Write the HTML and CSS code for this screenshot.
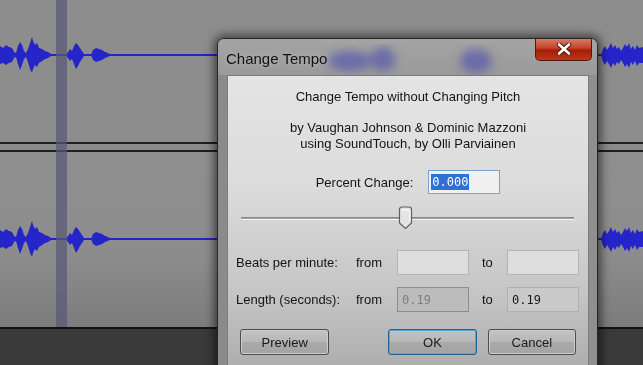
FILE: index.html
```html
<!DOCTYPE html>
<html lang="en">
<head>
<meta charset="utf-8">
<title>Change Tempo</title>
<link rel="stylesheet" href="styles.css">
</head>
<body>
<div class="stage">
	<svg class="defs" width="0" height="0">
		<defs>
			<g id="wave">
				<rect x="0" y="-1" width="643" height="2"/>
				<polygon points="0,-9 3,-7 6,-10 9,-8 12,-7 14,-3 16,-2 18,-9 20,-13 22,-10 24,-4 26,-2 28,-6 30,-12 32,-18 33,-14 35,-10 37,-12 39,-7 42,-6 45,-4 48,-3 51,-1 53,0 51,1 48,3 45,4 42,6 39,8 37,12 35,10 33,14 32,18 30,14 28,7 26,2 24,4 22,10 20,15 18,9 16,2 14,3 12,7 9,8 6,10 3,8 0,9"/>
				<polygon points="66,0 68,-3 70,-6 72,-4 74,-9 76,-12 78,-10 80,-7 82,-4 84,-1 86,0 84,1 82,4 80,7 78,11 76,14 74,9 72,4 70,6 68,3"/>
				<polygon points="91,0 93,-5 96,-7 99,-6 102,-5 105,-3 108,-2 111,0 108,2 105,3 102,5 99,6 96,7 93,5"/>
				<polygon points="601,0 603,-6 605,-9 607,-5 609,-8 611,-12 613,-7 615,-10 617,-6 619,-8 621,-4 623,-7 625,-11 627,-8 629,-12 631,-6 633,-9 635,-5 637,-10 639,-7 643,-8 643,8 639,8 637,11 635,6 633,10 631,7 629,13 627,9 625,12 623,8 621,5 619,9 617,7 615,11 613,8 611,13 609,9 607,6 605,10 603,7"/>
			</g>
		</defs>
	</svg>

	<div class="track track-top">
		<svg width="643" height="142"><use href="#wave" x="0" y="55"/></svg>
	</div>
	<div class="track-sep"></div>
	<div class="track track-bottom">
		<svg width="643" height="175"><use href="#wave" x="0" y="87"/></svg>
	</div>
	<div class="footer"></div>

	<div class="cursor-bar"></div>

	<div class="dialog">
		<div class="titlebar">
			<svg class="glass" width="380" height="36">
				<defs><filter id="blur"><feGaussianBlur stdDeviation="5"/></filter></defs>
				<g filter="url(#blur)" fill="#3a3ab4" opacity=".5">
					<ellipse cx="132" cy="22" rx="22" ry="10"/>
					<ellipse cx="165" cy="20" rx="12" ry="12"/>
					<ellipse cx="258" cy="22" rx="16" ry="12"/>
				</g>
			</svg>
			<span class="title">Change Tempo</span>
			<button class="close" type="button" aria-label="Close">
				<svg width="16" height="12" viewBox="0 0 16 12"><path d="M3 1.5 L13 10.5 M13 1.5 L3 10.5" stroke="#4a1008" stroke-width="4.5" stroke-linecap="round"/><path d="M3 1.5 L13 10.5 M13 1.5 L3 10.5" stroke="#fff" stroke-width="2.6" stroke-linecap="round"/></svg>
			</button>
		</div>
		<div class="client">
			<p class="heading">Change Tempo without Changing Pitch</p>
			<p class="credits">by Vaughan Johnson &amp; Dominic Mazzoni<br>using SoundTouch, by Olli Parviainen</p>

			<div class="percent-row">
				<label>Percent Change:</label>
				<div class="field focused"><span class="sel">0.000</span></div>
			</div>

			<div class="slider">
				<div class="slider-track"></div>
				<svg class="thumb" width="15" height="24" viewBox="0 0 15 24">
					<path d="M1.5 3.5 Q1.5 1 4 1 H11 Q13.5 1 13.5 3.5 V17 L7.5 22.5 L1.5 17 Z" fill="#e4e4e4" stroke="#5e5e5e" stroke-width="1.2"/>
					<path d="M3 4 H12 V15" fill="none" stroke="#fafafa" stroke-width="1"/>
				</svg>
			</div>

			<div class="rate-grid">
				<span>Beats per minute:</span>
				<span>from</span>
				<div class="field"></div>
				<span class="to">to</span>
				<div class="field"></div>

				<span>Length (seconds):</span>
				<span>from</span>
				<div class="field disabled">0.19</div>
				<span class="to">to</span>
				<div class="field plain">0.19</div>
			</div>

			<div class="buttons">
				<button type="button" class="btn">Preview</button>
				<button type="button" class="btn default">OK</button>
				<button type="button" class="btn">Cancel</button>
			</div>
		</div>
	</div>
</div>
</body>
</html>
```

FILE: styles.css
```css
*{margin:0;padding:0;box-sizing:border-box;}
body{background:#3b3b3b;font-family:"Liberation Sans",Arial,sans-serif;}
.stage{width:643px;height:365px;overflow:hidden;position:relative;display:flex;flex-direction:column;background:#3b3b3b;filter:blur(.4px);}
.defs{position:absolute;}
.track svg{display:block;}
#wave{fill:#2424c8;}
.track-top{height:142px;background:#8d8d8d;}
.track-sep{height:10px;background:#8b8b8b;border-top:2px solid #1e1e1e;border-bottom:2px solid #1e1e1e;}
.track-bottom{height:175px;background:linear-gradient(#8f8f8f,#8c8c8c 60%,#7c7c7c);}
.footer{flex:1;background:#3a3a3a;border-top:2px solid #121212;}

/* selection cursor line across both tracks */
.cursor-bar{position:absolute;left:56px;top:0;width:11px;height:327px;background:rgba(88,88,118,.72);}

/* dialog window */
.dialog{position:absolute;left:217px;top:38px;width:381px;height:345px;border:1px solid #262626;border-radius:7px 7px 0 0;background:linear-gradient(90deg,#8a8a8a,#9c9c9c 40%,#a0a0a0 80%,#8e8e8e);box-shadow:0 0 10px 3px rgba(0,0,0,.55);display:flex;flex-direction:column;}
.titlebar{height:36px;position:relative;display:flex;align-items:center;padding-left:8px;border-radius:6px 6px 0 0;background:linear-gradient(#a4a4a4,#9a9a9a);overflow:hidden;}
.glass{position:absolute;left:0;top:0;}
.title{position:relative;font-size:15px;color:#121212;margin-top:2px;text-shadow:0 0 6px rgba(255,255,255,.35);}
.close{position:absolute;right:5px;top:-1px;width:57px;height:23px;border:1px solid #4d1a12;border-top:0;border-radius:0 0 5px 5px;background:linear-gradient(#d8806a,#c4452c 45%,#a81c08 55%,#b83a1c);display:flex;align-items:center;justify-content:center;}
.close svg{display:block;}

.client{flex:1;margin:0 8px 0 9px;border:1px solid #7c7c7c;border-bottom:0;background:linear-gradient(#e4e4e4,#dcdcdc 35%,#c6c6c6 70%,#a9a9a9);padding-top:13px;font-size:13px;color:#141414;display:flex;flex-direction:column;}
.heading{line-height:16px;text-align:center;}
.credits{line-height:16px;text-align:center;margin-top:15px;}

.percent-row{margin-top:18px;display:flex;justify-content:center;align-items:center;gap:15px;}
.field{width:72px;height:25px;border:1px solid #a9a9a9;border-top-color:#9a9a9a;background:#e6e6e6;font-family:"DejaVu Sans Mono",monospace;font-size:12px;display:flex;align-items:center;padding-left:4px;color:#1a1a1a;}
.percent-row .field{height:24px;background:#f0f0f0;border-color:#7aa4cf;padding-left:2px;}
.sel{background:#2f6fd6;color:#fff;padding:0 1px;line-height:16px;}

.slider{margin-top:12px;height:24px;position:relative;margin-left:13px;margin-right:14px;display:flex;align-items:center;justify-content:center;}
.slider-track{width:100%;height:3px;background:#a2a2a2;border-bottom:1px solid #f4f4f4;border-top:1px solid #888;}
.thumb{position:absolute;left:157px;top:0;}

.rate-grid{margin-top:20px;padding-left:8px;display:grid;grid-template-columns:120px 41px 72px 38px 72px;grid-auto-rows:25px;row-gap:12px;align-items:center;}
.rate-grid .to{padding-left:13px;}
.rate-grid .field{background:#dedede;border-color:#b4b4b4;}
.rate-grid .field.disabled{background:#bcbcbc;border-color:#8e8e8e;color:#7e7e7e;}
.rate-grid .field.plain{background:#c9c9c9;border-color:#b0b0b0;}

.buttons{margin-top:17px;padding:0 12px;display:flex;gap:11px;}
.btn{width:89px;height:26px;border:1px solid #4c4c4c;border-radius:3px;background:linear-gradient(#c2c2c2,#b8b8b8 48%,#a9a9a9 52%,#a4a4a4);box-shadow:inset 0 0 0 1px #cdcdcd;font-family:inherit;font-size:13px;color:#1a1a1a;}
.btn:first-child{width:90px;margin-right:48px;}
.btn.default{border-color:#20608e;box-shadow:inset 0 0 0 1px #5aa6d6;}
```
